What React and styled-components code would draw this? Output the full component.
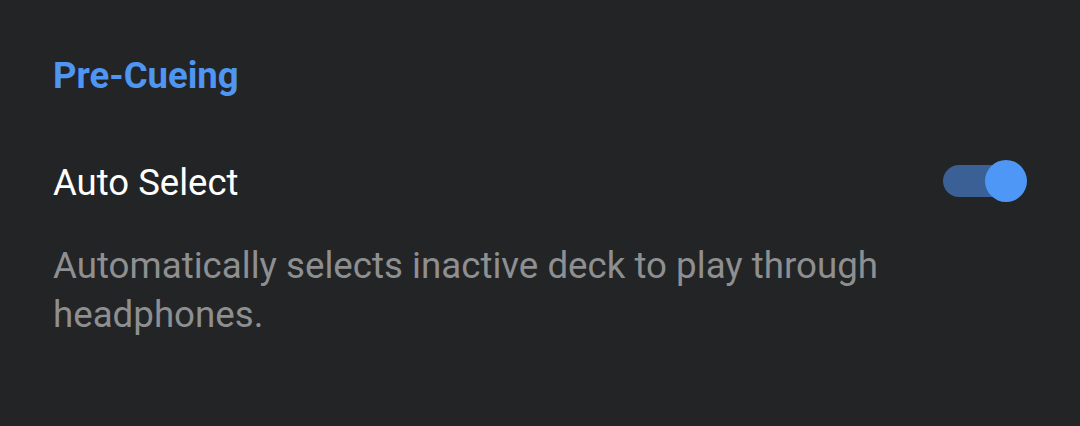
import styled, { createGlobalStyle } from 'styled-components';

const Global = createGlobalStyle`
    html, body {
        margin: 0;
        background: #232426;
    }
    body {
        font-family: Roboto, "Noto Sans", sans-serif;
    }
`;

const Page = styled.main`
    width: 1080px;
    height: 426px;
    box-sizing: border-box;
    padding: 54px 53px 0 53px;
    background: #232426;
`;

const Heading = styled.h2`
    margin: 0;
    font-size: 36.5px;
    font-weight: 700;
    line-height: 44px;
    color: #4f95f2;
`;

const Row = styled.div`
    display: flex;
    align-items: center;
    justify-content: space-between;
    margin-top: 63px;
`;

const Label = styled.span`
    font-size: 36.5px;
    line-height: 44px;
    color: #ffffff;
`;

const Track = styled.div`
    position: relative;
    width: 64px;
    height: 32px;
    margin: 0 20px 4px 0;
    border-radius: 16px;
    background: ${(p) => (p.on ? '#3b6096' : '#5f6368')};
`;

const Thumb = styled.div`
    position: absolute;
    top: -5px;
    left: ${(p) => (p.on ? '42px' : '-10px')};
    width: 42px;
    height: 42px;
    border-radius: 50%;
    background: ${(p) => (p.on ? '#4f97f7' : '#bdc1c6')};
`;

const Description = styled.p`
    margin: 36px 0 0;
    max-width: 880px;
    font-size: 36.7px;
    line-height: 49px;
    color: #8e8f91;
`;

const Toggle = ({ on }) => (
    <Track on={on ? 1 : 0}>
        <Thumb on={on ? 1 : 0} />
    </Track>
);

const App = () => {
    return (
        <Page>
            <Global />
            <Heading>Pre-Cueing</Heading>
            <Row>
                <Label>Auto Select</Label>
                <Toggle on />
            </Row>
            <Description>
                Automatically selects inactive deck to play through headphones.
            </Description>
        </Page>
    );
};

export default App;
